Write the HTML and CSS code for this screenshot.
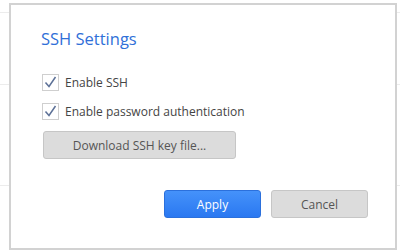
FILE: index.html
```html
<!DOCTYPE html>
<html lang="en">

<head>
    <meta charset="UTF-8">
    <meta name="viewport" content="width=device-width, initial-scale=1.0">
    <title>SSH Settings</title>
    <link rel="stylesheet" href="styles.css">
</head>

<body>

    <!-- page behind the dialog -->
    <div class="page">
        <div class="page-row row-top"></div>
        <div class="page-row row-mid"></div>
        <div class="page-row row-low"></div>
    </div>

    <div class="dialog">
        <h1 class="dialog-title">SSH Settings</h1>

        <label class="check-row">
            <span class="check-box">
                <svg width="17" height="17" viewBox="0 0 17 17">
                    <path d="M3.5 8.5 L7 12.5 L13.5 3" fill="none" stroke="#5d7197" stroke-width="1.5" />
                </svg>
            </span>
            <span class="check-label">Enable SSH</span>
        </label>

        <label class="check-row">
            <span class="check-box">
                <svg width="17" height="17" viewBox="0 0 17 17">
                    <path d="M3.5 8.5 L7 12.5 L13.5 3" fill="none" stroke="#5d7197" stroke-width="1.5" />
                </svg>
            </span>
            <span class="check-label">Enable password authentication</span>
        </label>

        <button class="btn btn-download">Download SSH key file...</button>

        <div class="dialog-actions">
            <button class="btn btn-primary">Apply</button>
            <button class="btn">Cancel</button>
        </div>
    </div>

</body>

</html>
```

FILE: styles.css
```css
/* Basic styling */
body {
    font-family: 'Open Sans', sans-serif;
    background-color: #fff;
    color: #444;
    margin: 0;
    padding: 0;
    width: 400px;
    height: 252px;
    overflow: hidden;
}

.page {
    display: flex;
    flex-direction: column;
}

.page-row {
    border-bottom: 1px solid #ececec;
}

.row-top {
    height: 12px;
}

.row-mid {
    height: 71px;
}

.row-low {
    height: 100px;
}

/* modal over the page */
.dialog {
    position: absolute;
    left: 9px;
    top: 3px;
    width: 388px;
    height: 247px;
    box-sizing: border-box;
    background-color: #fff;
    border: 2px solid #d2d2d2;
    padding: 23px 27px 0 30px;
    display: flex;
    flex-direction: column;
    align-items: flex-start;
}

.dialog-title {
    font-size: 16.5px;
    font-weight: normal;
    line-height: 22px;
    color: #3070d8;
    margin: 0 0 24px 0;
}

.check-row {
    display: flex;
    align-items: center;
    gap: 6px;
    margin-left: 1px;
    margin-bottom: 12px;
    cursor: pointer;
}

.check-row:last-of-type {
    margin-bottom: 11px;
}

.check-box {
    width: 17px;
    height: 17px;
    box-sizing: border-box;
    border: 1px solid #cfcfcf;
    background-color: #fff;
    display: flex;
}

.check-box svg {
    margin: -1px;
}

.check-label {
    font-size: 12px;
    line-height: 17px;
    color: #444;
}

.btn {
    font-family: 'Open Sans', sans-serif;
    font-size: 12px;
    width: 97px;
    height: 28px;
    padding: 0;
    background-color: #dcdcdc;
    color: #555;
    border: 1px solid #c6c6c6;
    border-radius: 3px;
    cursor: pointer;
}

.btn:hover {
    background-color: #d4d4d4;
}

.btn-download {
    width: 193px;
    margin-left: 2px;
}

.dialog-actions {
    display: flex;
    gap: 10px;
    align-self: flex-end;
    margin-top: 31px;
}

.btn-primary {
    background: linear-gradient(#4592fa, #2a78f1);
    border-color: #2b70dc;
    color: #fff;
}

.btn-primary:hover {
    background: linear-gradient(#3a88f2, #2470e6);
}
```
